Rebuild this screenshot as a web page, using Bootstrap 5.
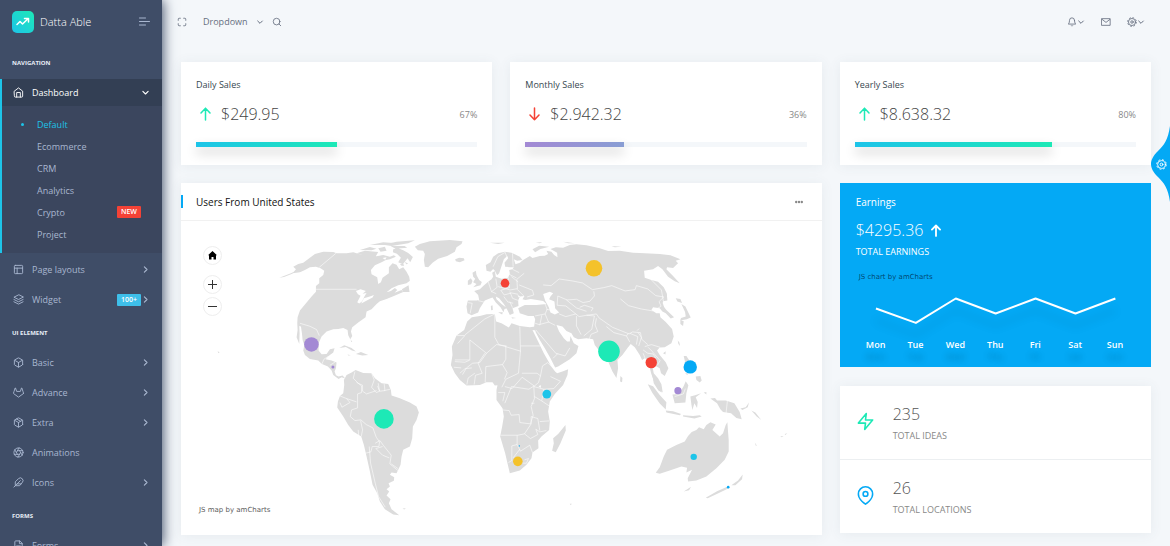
<!DOCTYPE html>
<html lang="en">
<head>
<meta charset="utf-8">
<meta name="viewport" content="width=device-width, initial-scale=1">
<title>Datta Able</title>
<link rel="stylesheet" href="https://cdn.jsdelivr.net/npm/bootstrap@5.3.0/dist/css/bootstrap.min.css">
<style>
  :root { --side: #3f4d67; --cyan: #1dc4e9; --green: #1de9b6; --blue: #04a9f5; --red: #f44236; --violet: #a389d4; --amber: #f4c22b; }
  body { background: #f4f7fa; color: #888; font-family: "Open Sans", sans-serif; font-size: 9px; line-height: 13px; }
  a { color: inherit; text-decoration: none; }
  svg { display: block; flex: none; }
  .line-icon { fill: none; stroke: currentColor; stroke-width: 2; stroke-linecap: round; stroke-linejoin: round; }
  .arrow-icon { stroke-width: 3; }
  .plain-btn { border: 0; background: none; color: inherit; padding: 0; line-height: 13px; }

  .sidebar { width: 162px; background: var(--side); color: #a9b7d0; box-shadow: 1px 0 12px 0 var(--side); z-index: 5; }
  .brand-row { height: 43px; padding: 0 12px; }
  .brand-name { font-size: 11px; font-weight: 300; color: #fff; margin-left: 6px; }
  .logo { width: 22px; height: 22px; border-radius: 5px; background: linear-gradient(-135deg, var(--green), var(--cyan)); }
  .caption { padding: 16px 12px 8px; font-size: 6px; line-height: 9px; font-weight: 700; color: #e8edf7; text-transform: uppercase; margin: 0; }
  .side-link { height: 27px; padding: 0 12px 0 13px; margin-top: 3px; gap: 8px; }
  .side-open { border-left: 2px solid var(--cyan); background: #3b465e; margin-top: 3px; }
  .side-open .side-link { margin: 0; padding-left: 11px; background: #333f54; color: #fff; }
  .side-sub { padding: 8px 0 7px; margin: 0; }
  .side-sub { padding: 7px 0 8px; }
  .side-sub a { height: 22px; padding: 0 21px 0 35px; }
  .side-sub a.current { color: var(--cyan); padding-left: 19px; gap: 13px; }
  .dot { width: 3px; height: 3px; border-radius: 50%; background: currentColor; }
  .tag { font-size: 7px; line-height: 8px; font-weight: 600; color: #fff; padding: 2px 4px; border-radius: 1px; }
  .tag-new { background: var(--red); }
  .tag-count { background: #3ebfea; margin-right: -8px; }

  .topbar { height: 43px; padding: 0 25px 0 15px; color: #666f80; }
  .board { padding: 19px 10px 0; }
  .board > .row { --bs-gutter-x: 18px; margin: 0; }
  .panel { background: #fff; box-shadow: 0 1px 12px 0 rgba(69,90,100,.08); }
  .sales { padding: 16px 15px 18px; margin-bottom: 18px; }
  .sales .trend-arrow { margin: 0 10px 0 4px; }
  .panel-name { font-size: 9px; line-height: 13px; font-weight: 400; color: #37474f; margin: 0 0 11px; }
  .figure-num { font-size: 16px; line-height: 24px; font-weight: 300; color: #444; margin: 0; }
  .meter { height: 5px; background: #f4f7fa; margin-top: 16px; }
  .meter-fill { height: 5px; background: linear-gradient(90deg, var(--cyan), var(--green)); box-shadow: 0 6px 12px 0 rgba(0,0,0,.2); }
  .meter-fill.violet { background: linear-gradient(90deg, var(--violet), #899ed4); }

  .panel-head { height: 38px; padding: 0 19px 0 0; border-bottom: 1px solid #f1f1f1; }
  .panel-head h2 { font-size: 10px; line-height: 14px; font-weight: 400; color: #111; margin: 0; padding-left: 13px; }
  .head-mark { width: 2px; height: 13px; background: var(--blue); }
  .map-tools { left: 22px; top: 25px; }
  .map-tools button { width: 19px; height: 19px; border: 1px solid #eee; border-radius: 50%; background: #fff; padding: 0; margin-bottom: 3px; color: #333; }
  .map-tools button:first-child { margin-bottom: 10px; color: #000; }
  .chart-credit { font-family: "DejaVu Sans", sans-serif; font-size: 7px; line-height: 10px; color: #5c5c5c; }
  .map-credit { left: 18px; bottom: 20px; }
  .land { fill: #dcdcdc; }
  .border-lines { fill: none; stroke: #fff; stroke-width: 2; stroke-opacity: .85; stroke-linejoin: round; }

  .earnings { background: var(--blue); color: #fff; padding: 12px 16px 16px; margin-bottom: 19px; }
  .earnings h2 { font-size: 10px; line-height: 14px; font-weight: 400; margin: 0 0 9px; }
  .earnings .figure-num { color: #fff; }
  .earnings .chart-credit { color: rgba(0,20,50,.7); margin: 14px 0 12px 3px; }
  .trend { filter: drop-shadow(0 12px 4px rgba(0,0,0,.12)); }
  .days { font-weight: 600; margin-top: 12px; text-shadow: 0 12px 6px rgba(0,0,0,.2); }
  .stat { padding: 16px 16px 17px; }
  .stat .glyph { width: 19px; margin-right: 18px; }
  .stat + .stat { border-top: 1px solid #eceff1; }
  .stat-name { line-height: 13px; margin-top: 3px; }
  .stat .figure-num { color: #555; }

  .customizer { top: 126px; color: #fff; z-index: 9; }
  .customizer .cog { right: 3px; top: 33px; }
</style>
</head>
<body>
<svg width="0" height="0" class="position-absolute" aria-hidden="true">
  <symbol id="chev" viewBox="0 0 24 24"><path d="M9 5l7 7-7 7"/></symbol>
  <symbol id="down" viewBox="0 0 24 24"><path d="M5 9l7 7 7-7"/></symbol>
  <symbol id="up-arrow" viewBox="0 0 11 14"><path d="M5.500 13V1.200M1 6l4.500-4.800L10 6" fill="none" stroke="currentColor" stroke-width="1.500" stroke-linecap="round" stroke-linejoin="round"/></symbol>
  <symbol id="cog" viewBox="0 0 24 24"><circle cx="12" cy="12" r="3"/><circle cx="12" cy="12" r="8.500"/><circle cx="12" cy="12" r="10.500" stroke-dasharray="4.200 4.040" stroke-width="2" stroke-linecap="butt"/></symbol>
  <symbol id="box" viewBox="0 0 24 24"><path d="M21 16V8a2 2 0 0 0-1-1.730l-7-4a2 2 0 0 0-2 0l-7 4A2 2 0 0 0 3 8v8a2 2 0 0 0 1 1.730l7 4a2 2 0 0 0 2 0l7-4A2 2 0 0 0 21 16zM3.270 6.960L12 12.010l8.730-5.050M12 22.080V12"/></symbol>
</svg>

<div class="d-flex align-items-start">
  <nav class="sidebar vh-100 sticky-top overflow-visible flex-shrink-0" aria-label="Main">
    <div class="vh-100 overflow-hidden">
    <div class="brand-row d-flex align-items-center">
      <a href="#" class="d-flex align-items-center">
        <span class="logo d-flex align-items-center justify-content-center"><svg width="14" height="14" viewBox="0 0 14 14" fill="none" stroke="#fff" stroke-width="1.500" stroke-linecap="round" stroke-linejoin="round"><path d="M1 9.500l3-3 2.500 2.500L12 3.800M8.500 3.500H12.500V7"/></svg></span>
        <span class="brand-name">Datta Able</span>
      </a>
      <button class="plain-btn ms-auto" aria-label="Toggle menu"><svg width="11" height="9" viewBox="0 0 11 9" fill="none" stroke="currentColor" stroke-linecap="round"><path d="M.500 1h6M.500 4.500h10M.500 8h6"/></svg></button>
    </div>

    <p class="caption">Navigation</p>
    <div class="side-open">
      <a href="#" class="side-link d-flex align-items-center">
        <svg class="line-icon" width="11" height="11" viewBox="0 0 24 24"><path d="M3 9l9-7 9 7v11a2 2 0 0 1-2 2H5a2 2 0 0 1-2-2zM8 22V12h8v10"/></svg>
        Dashboard<svg class="line-icon arrow-icon ms-auto" width="9" height="9"><use href="#down"/></svg></a>
      <div class="side-sub">
        <a href="#" class="current d-flex align-items-center"><span class="dot"></span>Default</a>
        <a href="#" class="d-flex align-items-center">Ecommerce</a>
        <a href="#" class="d-flex align-items-center">CRM</a>
        <a href="#" class="d-flex align-items-center">Analytics</a>
        <a href="#" class="d-flex align-items-center">Crypto<span class="tag tag-new ms-auto">NEW</span></a>
        <a href="#" class="d-flex align-items-center">Project</a>
      </div>
    </div>
    <a href="#" class="side-link d-flex align-items-center"><svg class="line-icon" width="11" height="11" viewBox="0 0 24 24"><rect x="3" y="3" width="18" height="18" rx="2"/><path d="M3 9h18M9 21V9"/></svg>Page layouts<svg class="line-icon arrow-icon ms-auto" width="9" height="9"><use href="#chev"/></svg></a>
    <a href="#" class="side-link d-flex align-items-center"><svg class="line-icon" width="11" height="11" viewBox="0 0 24 24"><path d="M12 2L2 7l10 5 10-5zM2 17l10 5 10-5M2 12l10 5 10-5"/></svg>Widget<span class="tag tag-count ms-auto">100+</span><svg class="line-icon arrow-icon" width="9" height="9"><use href="#chev"/></svg></a>

    <p class="caption">UI Element</p>
    <a href="#" class="side-link d-flex align-items-center"><svg class="line-icon" width="11" height="11"><use href="#box"/></svg>Basic<svg class="line-icon arrow-icon ms-auto" width="9" height="9"><use href="#chev"/></svg></a>
    <a href="#" class="side-link d-flex align-items-center"><svg class="line-icon" width="11" height="11" viewBox="0 0 24 24"><path d="M22.650 14.390L12 22.130 1.350 14.390a.840.840 0 0 1-.300-.940l1.220-3.780 2.440-7.510A.420.420 0 0 1 4.820 2a.430.430 0 0 1 .580 0 .420.420 0 0 1 .110.180l2.440 7.490h8.100l2.440-7.510A.420.420 0 0 1 18.600 2a.430.430 0 0 1 .580 0 .420.420 0 0 1 .110.180l2.440 7.510L23 13.450a.840.840 0 0 1-.350.940z"/></svg>Advance<svg class="line-icon arrow-icon ms-auto" width="9" height="9"><use href="#chev"/></svg></a>
    <a href="#" class="side-link d-flex align-items-center"><svg class="line-icon" width="11" height="11" viewBox="0 0 24 24"><use href="#box"/><path d="M16.500 9.400l-9-5.190"/></svg>Extra<svg class="line-icon arrow-icon ms-auto" width="9" height="9"><use href="#chev"/></svg></a>
    <a href="#" class="side-link d-flex align-items-center"><svg class="line-icon" width="11" height="11" viewBox="0 0 24 24"><circle cx="12" cy="12" r="10"/><path d="M14.310 8l5.740 9.940M9.690 8h11.480M7.380 12l5.740-9.940M9.690 16L3.950 6.060M14.310 16H2.830M16.620 12l-5.740 9.940"/></svg>Animations</a>
    <a href="#" class="side-link d-flex align-items-center"><svg class="line-icon" width="11" height="11" viewBox="0 0 24 24"><path d="M20.240 12.240a6 6 0 0 0-8.490-8.490L5 10.500V19h8.500zM16 8L2 22M17.500 15H9"/></svg>Icons<svg class="line-icon arrow-icon ms-auto" width="9" height="9"><use href="#chev"/></svg></a>

    <p class="caption">Forms</p>
    <a href="#" class="side-link d-flex align-items-center"><svg class="line-icon" width="11" height="11" viewBox="0 0 24 24"><path d="M14 2H6a2 2 0 0 0-2 2v16a2 2 0 0 0 2 2h12a2 2 0 0 0 2-2V8zM14 2v6h6M16 13H8M16 17H8"/></svg>Forms<svg class="line-icon arrow-icon ms-auto" width="9" height="9"><use href="#chev"/></svg></a>
    </div>
  </nav>

  <div class="flex-grow-1">
    <header class="topbar d-flex align-items-center">
      <button class="plain-btn me-3" aria-label="Full screen"><svg class="line-icon" width="10" height="10" viewBox="0 0 24 24"><path d="M8 3H5a2 2 0 0 0-2 2v3M21 8V5a2 2 0 0 0-2-2h-3M16 21h3a2 2 0 0 0 2-2v-3M3 16v3a2 2 0 0 0 2 2h3"/></svg></button>
      <button class="plain-btn d-flex align-items-center gap-2">Dropdown<svg class="line-icon arrow-icon" width="8" height="8"><use href="#down"/></svg></button>
      <button class="plain-btn ms-2" aria-label="Search"><svg class="line-icon" width="10" height="10" viewBox="0 0 24 24"><circle cx="11" cy="11" r="8"/><path d="M21 21l-4.350-4.350"/></svg></button>
      <button class="plain-btn d-flex align-items-center ms-auto" aria-label="Notifications"><svg class="line-icon" width="10" height="10" viewBox="0 0 24 24"><path d="M18 8A6 6 0 0 0 6 8c0 7-3 9-3 9h18s-3-2-3-9M13.730 21a2 2 0 0 1-3.460 0"/></svg><svg class="line-icon arrow-icon" width="8" height="8"><use href="#down"/></svg></button>
      <button class="plain-btn mx-3" aria-label="Messages"><svg class="line-icon" width="10" height="10" viewBox="0 0 24 24"><rect x="2" y="4" width="20" height="16"/><path d="M3 6l9 7 9-7"/></svg></button>
      <button class="plain-btn d-flex align-items-center" aria-label="Settings"><svg class="line-icon" width="10" height="10"><use href="#cog"/></svg><svg class="line-icon arrow-icon" width="8" height="8"><use href="#down"/></svg></button>
    </header>

    <main class="board">
      <div class="row">
        <div class="col-4">
          <section class="panel sales">
            <h2 class="panel-name">Daily Sales</h2>
            <div class="d-flex align-items-center">
              <svg class="trend-arrow" width="11" height="14" style="color:#1de9b6"><use href="#up-arrow"/></svg>
              <p class="figure-num">$249.95</p><span class="ms-auto">67%</span>
            </div>
            <div class="meter"><div class="meter-fill" style="width:50%"></div></div>
          </section>
        </div>
        <div class="col-4">
          <section class="panel sales">
            <h2 class="panel-name">Monthly Sales</h2>
            <div class="d-flex align-items-center">
              <svg class="trend-arrow" width="11" height="14" viewBox="0 0 11 14" style="color:#f44236"><path d="M5.500 1v11.800M1 8l4.500 4.800L10 8" fill="none" stroke="currentColor" stroke-width="1.500" stroke-linecap="round" stroke-linejoin="round"/></svg>
              <p class="figure-num">$2.942.32</p><span class="ms-auto">36%</span>
            </div>
            <div class="meter"><div class="meter-fill violet" style="width:35%"></div></div>
          </section>
        </div>
        <div class="col-4">
          <section class="panel sales">
            <h2 class="panel-name">Yearly Sales</h2>
            <div class="d-flex align-items-center">
              <svg class="trend-arrow" width="11" height="14" style="color:#1de9b6"><use href="#up-arrow"/></svg>
              <p class="figure-num">$8.638.32</p><span class="ms-auto">80%</span>
            </div>
            <div class="meter"><div class="meter-fill" style="width:70%"></div></div>
          </section>
        </div>

        <div class="col-8">
          <section class="panel mb-2">
            <div class="panel-head d-flex align-items-center">
              <span class="head-mark"></span><h2>Users From United States</h2>
              <button class="plain-btn ms-auto" aria-label="Card options"><svg width="8" height="4" viewBox="0 0 8 4" fill="#888"><circle cx="1.200" cy="2" r="1.200"/><circle cx="4" cy="2" r="1.200"/><circle cx="6.800" cy="2" r="1.200"/></svg></button>
            </div>
            <div class="position-relative">
              <svg class="w-100 h-auto" viewBox="181 221 641 314" role="img" aria-label="World map">
                <g transform="translate(190 230) scale(.33333)">
                  <g class="land">
                    <!-- North America -->
                    <path d="M310,110L325,102 340,98 358,85 375,72 400,65 430,66 440,70 470,70 490,67 510,73 535,72 560,79 580,75 600,80 612,76 618,80 600,88 588,90 575,97 555,106 543,120 545,133 562,142 565,162 573,157 578,143 597,130 597,112 608,100 620,104 628,118 640,112 650,125 658,140 660,152 650,160 625,166 605,175 590,187 603,183 615,174 622,180 614,188 635,180 640,186 612,198 590,207 570,214 560,222 545,238 530,245 527,262 505,278 487,292 483,305 487,318 481,328 475,316 473,300 460,294 445,297 430,298 410,305 395,320 386,340 386,362 395,373 410,372 420,358 434,355 430,368 420,375 414,380 407,388 425,392 440,398 438,415 434,425 438,436 446,440 458,437 466,446 455,442 446,447 430,435 425,422 414,410 396,402 385,392 360,387 345,375 340,362 343,345 338,330 336,310 333,290 328,288 329,310 328,342 320,322 323,300 322,280 323,262 330,242 350,218 365,200 378,185 378,168 388,160 388,145 400,135 403,122 392,115 378,110 360,112 345,120 330,127 308,130 318,118Z"/>
                    <path d="M268,143l35-13 14-7-10 8-25 10z"/>
                    <path d="M636,178l20-12 3 20-20 0zM500,70l25-8 40 4-8 14-30-3zM510,60l30-9 20 5-15 5zM565,55l20-5 5 12-18 3zM540,45l40-8 30 2-25 6zM580,44l40-9 55-4-20 9-50 8zM610,58l15-3 15 6 15 8 14 12-8 16-8-12 -14 18-14-6 8-14-12-12 -12-4zM645,95l10 6-6 2zM630,103l10-2 3 6-8 0zM602,48l42 0 8 5-35 3z"/>
                    <!-- Greenland -->
                    <path d="M705,72L700,62 684,61 675,50 690,42 720,34 780,30 818,34 815,42 800,52 795,65 772,78 745,86 728,98 715,112 705,110 702,90Z"/>
                    <!-- Caribbean and Pacific islands -->
                    <path d="M448,354l15-8 22 8 13 11-12-3-18-11zM498,372l15-6 22 9-18 2zM473,374l10 2-8 1zM482,328l5 8-3 0zM83,364l6 3-4 3zM78,353l4 1zM638,836l10-1-5 4z"/>
                    <!-- South America -->
                    <path d="M462,450L470,435 485,428 497,420 520,429 545,430 555,445 575,460 595,462 603,480 605,497 630,505 660,518 680,530 687,548 680,570 669,590 667,625 660,650 640,660 635,680 632,705 620,730 605,728 600,735 613,742 612,753 596,760 600,770 590,778 598,785 590,797 602,808 597,820 605,838 628,856 610,854 585,838 570,815 562,790 548,765 540,725 530,680 522,645 514,620 490,605 475,585 460,560 442,533 444,515 450,498 460,490 463,465Z"/>
                    <g transform="translate(720)">
                      <!-- Africa -->
                      <path d="M126,262L150,258 170,253 195,252 199,275 215,280 237,293 245,280 270,288 300,292 316,290 318,302 308,300 325,335 342,370 362,405 376,425 382,430 400,424 415,418 413,435 400,465 375,492 360,515 355,545 360,575 358,600 335,620 325,632 326,655 308,668 305,685 290,705 270,722 240,730 234,705 226,670 211,620 217,590 222,560 218,535 200,510 200,480 203,466 195,467 188,457 170,457 150,465 110,467 90,450 75,430 63,405 68,375 66,350 80,317 103,300 112,275Z"/>
                      <path d="M407,585L408,602 392,640 378,667 367,663 372,640 370,625 385,612Z"/>
                      <!-- Eurasia -->
                      <path d="M113,250L110,230 114,212 140,212 148,210 145,195 133,183 150,178 160,168 175,155 185,148 190,140 187,128 195,123 198,140 215,146 235,143 240,130 238,120 248,118 252,112 240,112 226,110 224,98 235,85 232,78 222,88 218,100 214,112 208,130 202,136 195,122 190,117 182,125 170,122 168,105 182,97 190,80 205,70 225,65 245,68 270,80 278,90 262,92 252,88 257,103 270,98 280,90 300,78 308,84 330,78 345,77 355,72 350,62 365,65 373,75 383,82 382,68 362,57 378,52 400,53 420,45 440,43 470,46 510,55 535,63 570,62 610,68 630,69 690,72 722,76 752,88 738,92 745,100 730,114 712,112 710,118 730,138 750,160 735,154 715,140 698,118 685,108 670,118 643,122 645,143 665,150 685,155 702,172 711,190 713,212 700,214 698,225 710,240 733,262 723,266 708,250 698,245 690,235 670,232 665,240 680,250 690,250 692,262 708,276 727,297 732,320 725,340 705,352 690,353 682,362 690,375 708,397 716,415 705,438 694,430 690,415 678,408 668,410 672,430 685,445 695,463 699,488 685,478 673,455 664,430 656,395 645,385 637,390 630,375 615,352 603,342 595,352 578,375 563,390 565,415 560,444 548,425 535,395 520,370 505,358 495,345 490,328 470,325 445,328 432,322 425,310 410,303 398,290 380,285 388,305 402,325 412,335 420,335 422,318 432,340 446,348 440,370 420,388 385,410 376,413 362,385 345,355 330,330 318,308 313,290 316,268 312,258 295,258 270,250 265,235 285,225 320,225 350,222 340,213 322,210 303,207 287,210 278,208 284,198 270,200 265,212 266,228 248,235 252,250 240,255 230,235 222,222 208,205 198,200 200,208 215,222 232,235 224,237 221,247 212,232 198,218 188,203 176,207 165,212 150,235 145,248 125,256Z"/>
                      <path d="M128,128L138,122 140,135 148,150 156,156 152,166 130,172 140,162 130,157 136,146 130,140ZM114,152l9-7 5 8-4 10-10 2zM76,88l12-5 14 2 2 6-14 6-12-3zM205,247l14 0-2 7zM183,228l5-2 1 14-5 1zM308,58l20-11 30 3-26 7-16 10zM180,38l45 0-20 4zM318,38l20-2-8 4zM572,438l6 6-1 13-6-2zM245,262l14 2-12 2z"/>
                    </g>
                    <g transform="translate(1110)">
                      <!-- East Asian and Pacific islands -->
                      <path d="M288,155l20 18 14 22-2 14-12-18zM348,205l14 2 5 12-14-4zM365,222l12 8 16 33-12 5-20 4 3-8 14-4-2-14zM362,270l10 4-2 14-8-6zM298,208l12 14 6 20-10-4-6-16zM354,332l5 6 2 10-5-6zM310,370l8-6-1 10zM372,378l8 0 8 12-4 14-8-8zM408,440l14-2 4 14-6 6-10-8zM375,428l10 4-3 3zM264,463l16 6 20 26 20 22-2 22-18-18-22-32zM275,418l7 30 16 14 8 26-10-6-14-22zM318,542l22 2 24 8-4 4-40-8zM370,556l30 2 20-2 6 4-22 6-34-6zM338,494l20-2 14-24 6-14 8 12-6 24-3 28-32 2zM392,500l14-4 18-6-16 12 6 14-2 18-8-14-6 20-3-16zM432,488l8-2 0 8zM452,506l14-2 6 8 26 0 26 8 16 26 6 22-16-4-16-14-24-4-8-8-10-18zM542,536l16-4 10-14-4 14-16 8zM575,542l12 6 18 22-14-10zM585,638l6 8-2 3zM662,618l10 2-6 2zM675,612l8-2-6 5zM617,598l4 8zM10,35l35 5-20 0zM155,48l30 2-20 2zM295,62l10 4zM30,822l6 0-3 4z"/>
                      <!-- Australia and New Zealand -->
                      <path d="M288,729L300,712 312,680 322,660 350,645 375,635 385,618 396,606 410,600 418,592 432,598 440,585 452,577 468,584 458,600 480,620 490,610 498,585 503,577 505,605 507,630 507,665 495,690 470,715 440,740 410,752 385,755 384,745 397,720 380,728 382,714 365,710 330,722 300,732ZM372,785l22-14-6 10zM438,804l34-20 32-14 6 4-34 16-32 15zM515,766l20-14 14-18-2 14-20 18z"/>
                    </g>
                  </g>
                  <g fill="#fff">
                    <!-- Inland waters -->
                    <path d="M498,183l14-5 16 5-10 8 12-2-6 10-8 16-8 6-6-4 10-20-8-4zM522,205l20-6 10-4-4 8-20 10-14 8zM578,84l12-2-4 7z"/>
                    <g transform="translate(720)">
                      <path d="M340,192L360,185 370,190 362,200 358,208 374,215 376,235 388,248 375,254 362,248 357,232 346,212ZM263,195l8 4-4 4zM326,468l8-2-2 8z"/>
                    </g>
                  </g>
                  <g class="border-lines">
                    <path d="M388,112L438,70M378,178H500M330,280l30 9 20 10 8 18M396,402l6-14 12-8M420,406l16-10M500,458l18 8 0 18 12 8 30-10M495,425l-5 20 15 15 10 8 0 20-12 4 0 42-18 6-4 20 14 12 18-2 16 14 20 10 10 28 10 14-2 14-20 0-4 16-16 4-12-10-8-30-2-30M450,498l20 8 10 12-24 14-6-14M470,506l30 10M514,620l4-20-6-28M538,650l4 50 14 60 10 40 20 32M556,640l14-8 10 14 24 30-4 26 24 20M604,702l20 14M578,650l-20 6 20 20 20 8M545,430l8 20-8 22 14 16 10-4-6-16M565,460l4 24 16-2-2-20M583,482l18-4"/>
                    <g transform="translate(720)">
                      <path d="M80,317h25l-22 24M120,330v60l-45 0M120,330l50 40-20 28-22 2-18 14-12 20M170,370l30-26M105,315l60-48 30-15M195,252v70l12 22 66 20M270,290l2 74M272,348h60M200,344l30 4M228,348l0 40-10 16-50 6-2 48M272,364l-6 66-38 18-12 24M218,404l14 24-8 20M165,370l-20 30 12 30-20 6-4 28M135,430l-20 14-4 20M90,430l16-14 20-2M75,395l30 2 14-6M72,412l22 2M225,470l22 6 30-34 36 26-16 10-52-8-20 50M276,430h46l10 8 6-30 16-10 26 28M332,438l-6 20-14 12 30 8 30-2 20-22-30-14M312,470l2 36-10 24 6 26-8 26-32-4-2-24-24 2-6-14-22-2M314,500l20 12 24 16M304,520h10M342,478l-6 34M212,616h52l20-4 18 14 22-12-6-16 12 8 20-4M262,616v28l-16 4 0 44-10 6M262,644l10 20 28-18M300,646l8 22M284,612l20-30 0-22 20 6 6 36M330,575l28-2M284,690l12-4-6 14-10 0M205,488h20l-6 26M250,684l20-26"/>
                      <path d="M115,218l12 2-6 30M145,212l24 6M175,155l10 30 14 6M198,146l4 26-18 14M235,143l4 30-26 8M205,170l36 10 22-4-2-28 22-18M245,140l20 16M248,118l20 10M250,110l-2-40M190,110l14-30 24-14M213,181l10 14 22-6 20 4M240,185l8 20 16 6M222,200l12 16 16 4M262,178l20 20M240,215l8 18M268,165l40 16 4 14-20 6M232,110v20l28 14M226,68l6 14"/>
                      <path d="M316,258l30-6 6-14-6-16M346,252l10 24 20 10M316,280l12 4 30-8M336,256l-6 30M318,300l60 70 28 8 14-24M370,385l14-14M350,238l22 4M340,165l24 2 24-20 40 6 30 6 30 20 34-6 24-6 40 16 30-4 4-12 34 10 24 20 24 4-14 14 6 14-24 14-36-6-38-10-24-20M388,252l20 8 30-8 10 8 22-4 24 2-8 40-24 20M438,252l-30-24-26-2 2-28 28 12 28-2 20 10 20-4 14-16-2-14M410,210l30 24 30 10M440,258l0 30 14 26M470,256l30-4 8 12 40 28 50 20 10-6 24 2 4 20 18 16M500,265l-4 20 8 20-20 8-8 20M530,290l22 18 38 10 6-8M590,318l10 18M600,310l24 10-4 24M450,232l14-6 26 8-6 10M625,308l10 14-8 26M645,350l20-6 26 8M640,360l14 10 16 2 8 12M655,352l12 12 24 28-8 14M640,370l12 30M622,302l6-6M665,150l30 30 6 34"/>
                    </g>
                    <g transform="translate(1110)"><path d="M503,513l-4 38M345,500l26-8 6-16"/></g>
                  </g>
                </g>
                <circle cx="311.500" cy="344.500" r="7.300" fill="#a389d4"/>
                <circle cx="333" cy="367" r="1.500" fill="#a389d4"/>
                <circle cx="384" cy="419" r="9.800" fill="#1de9b6"/>
                <circle cx="505.200" cy="283.200" r="4.300" fill="#f44236"/>
                <circle cx="594.200" cy="268.300" r="8.300" fill="#f4c22b"/>
                <circle cx="609.200" cy="351.400" r="10.800" fill="#1de9b6"/>
                <circle cx="651.500" cy="362.700" r="5.700" fill="#f44236"/>
                <circle cx="690.500" cy="367" r="6.700" fill="#04a9f5"/>
                <circle cx="678.200" cy="390.800" r="3.600" fill="#a389d4"/>
                <circle cx="547" cy="394.200" r="4.400" fill="#1dc4e9"/>
                <circle cx="518" cy="461.500" r="4.800" fill="#f4c22b"/>
                <circle cx="519.500" cy="446" r=".700" fill="#04a9f5"/>
                <circle cx="694" cy="457" r="3.200" fill="#1dc4e9"/>
                <circle cx="728.500" cy="487.300" r="1.300" fill="#04a9f5"/>
              </svg>
              <div class="map-tools position-absolute d-flex flex-column">
                <button class="d-flex align-items-center justify-content-center" aria-label="Home"><svg width="9" height="9" viewBox="0 0 9 9"><path d="M4.500 0L9 4.300H8V8.500H5.500V6h-2v2.500H1V4.300H0z" fill="currentColor"/></svg></button>
                <button class="d-flex align-items-center justify-content-center" aria-label="Zoom in"><svg width="9" height="9" viewBox="0 0 9 9" stroke="currentColor"><path d="M0 4.500h9M4.500 0v9"/></svg></button>
                <button class="d-flex align-items-center justify-content-center" aria-label="Zoom out"><svg width="9" height="9" viewBox="0 0 9 9" stroke="currentColor"><path d="M0 4.500h9"/></svg></button>
              </div>
              <a href="#" class="chart-credit map-credit position-absolute">JS map by amCharts</a>
            </div>
          </section>
        </div>

        <div class="col-4">
          <section class="earnings">
            <h2>Earnings</h2>
            <div class="d-flex align-items-center"><p class="figure-num">$4295.36</p><svg class="ms-2" width="10" height="13" viewBox="0 0 11 14"><path d="M5.500 13V1.500M1 6l4.500-4.500L10 6" fill="none" stroke="#fff" stroke-width="2" stroke-linecap="round" stroke-linejoin="round"/></svg></div>
            <div class="stat-name">TOTAL EARNINGS</div>
            <div><a href="#" class="chart-credit d-inline-block">JS chart by amCharts</a></div>
            <svg class="trend w-100 h-auto" viewBox="0 0 280 32" fill="none" stroke="#fff" stroke-width="2" stroke-linejoin="round" role="img" aria-label="Earnings by day"><path d="M20 14.500L60 29 100 4.500 140 19.500 180 4.500 220 19.500 260 4.500"/></svg>
            <div class="days row g-0 text-center"><div class="col">Mon</div><div class="col">Tue</div><div class="col">Wed</div><div class="col">Thu</div><div class="col">Fri</div><div class="col">Sat</div><div class="col">Sun</div></div>
          </section>
          <section class="panel mb-2">
            <div class="stat d-flex align-items-center">
              <svg class="line-icon glyph" height="19" viewBox="0 0 24 24" style="color:#1de9b6"><path d="M13 2L3 14h9l-1 8 10-12h-9z"/></svg>
              <div><p class="figure-num">235</p><div class="stat-name">TOTAL IDEAS</div></div>
            </div>
            <div class="stat d-flex align-items-center">
              <svg class="line-icon glyph" height="19" viewBox="0 0 24 24" style="color:#04a9f5"><path d="M21 10c0 7-9 13-9 13s-9-6-9-13a9 9 0 0 1 18 0z"/><circle cx="12" cy="10" r="3"/></svg>
              <div><p class="figure-num">26</p><div class="stat-name">TOTAL LOCATIONS</div></div>
            </div>
          </section>
        </div>
      </div>
    </main>
  </div>
</div>

<button class="customizer plain-btn position-fixed end-0" aria-label="Customise theme">
  <svg width="19" height="76" viewBox="0 0 19 76"><path d="M19 0C17 14 13 19 7 25 2 30 0 34 0 38s2 8 7 13c6 6 10 11 12 25z" fill="#04a9f5"/></svg>
  <svg class="line-icon cog position-absolute" width="11" height="11"><use href="#cog"/></svg>
</button>
<script src="https://cdn.jsdelivr.net/npm/bootstrap@5.3.0/dist/js/bootstrap.bundle.min.js"></script>
</body>
</html>
